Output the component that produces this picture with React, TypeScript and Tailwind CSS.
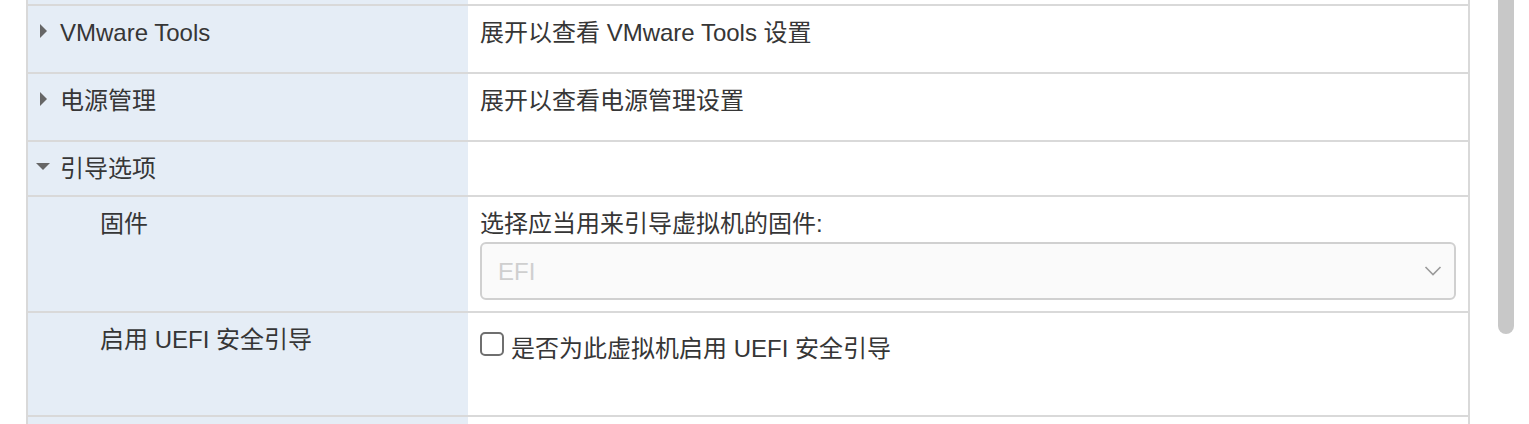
import React from 'react';

const FONT = "font-['Liberation_Sans','Noto_Sans_CJK_SC',sans-serif]";

const Caret: React.FC<{ open?: boolean }> = ({ open }) => (
    <span className="flex h-[29px] w-[14px] shrink-0 items-center justify-center">
        {open ? (
            <svg width="14" height="7" viewBox="0 0 14 7">
                <polygon points="0,0 14,0 7,7" fill="#666" />
            </svg>
        ) : (
            <svg width="7" height="14" viewBox="0 0 7 14">
                <polygon points="0,0 7,7 0,14" fill="#666" />
            </svg>
        )}
    </span>
);

interface RowProps {
    label: React.ReactNode;
    children?: React.ReactNode;
    className?: string;
}

const Row: React.FC<RowProps> = ({ label, children, className = '' }) => (
    <div className={`grid grid-cols-[440px_1fr] border-t-2 border-[#d9d9d9] ${className}`}>
        <div className="bg-[#e5edf6]">{label}</div>
        <div className="min-w-0">{children}</div>
    </div>
);

const GroupLabel: React.FC<{ text: string; open?: boolean }> = ({ text, open }) => (
    <div className="flex items-start gap-[10px] pl-[8px] pt-[10px]">
        <Caret open={open} />
        <span>{text}</span>
    </div>
);

const SubLabel: React.FC<{ text: string }> = ({ text }) => (
    <div className="pl-[72px] pt-[10px]">{text}</div>
);

export default function App() {
    return (
        <div className={`flex h-[424px] overflow-hidden bg-white text-[24px] leading-[33px] text-[#363636] ${FONT}`}>
            <div className="ml-[26px] w-[1444px] shrink-0 border-x-2 border-[#d9d9d9]">
                {/* tail of the previous row */}
                <div className="grid h-[4px] grid-cols-[440px_1fr]">
                    <div className="bg-[#e5edf6]" />
                    <div />
                </div>

                <Row className="h-[68px]" label={<GroupLabel text="VMware Tools" />}>
                    <div className="pl-[12px] pt-[10px]">展开以查看 VMware Tools 设置</div>
                </Row>

                <Row className="h-[68px]" label={<GroupLabel text="电源管理" />}>
                    <div className="pl-[12px] pt-[10px]">展开以查看电源管理设置</div>
                </Row>

                <Row className="h-[55px]" label={<GroupLabel text="引导选项" open />} />

                <Row className="h-[116px]" label={<SubLabel text="固件" />}>
                    <div className="pl-[12px] pr-[12px] pt-[10px]">
                        <div>选择应当用来引导虚拟机的固件:</div>
                        <div className="mt-[2px] flex h-[58px] items-center justify-between rounded-[6px] border-2 border-[#d0d0d0] bg-[#fafafa] pl-[16px] pr-[12px]">
                            <span className="text-[#cfcfcf]">EFI</span>
                            <svg width="18" height="12" viewBox="0 0 18 12" fill="none">
                                <path d="M1.5 2 L9 9.5 L16.5 2" stroke="#9a9a9a" strokeWidth="1.6" />
                            </svg>
                        </div>
                    </div>
                </Row>

                <Row className="h-[104px]" label={<SubLabel text="启用 UEFI 安全引导" />}>
                    <label className="flex items-start gap-[7px] pl-[12px] pt-[19px]">
                        <span className="h-[24px] w-[24px] shrink-0 rounded-[5px] border-2 border-[#6f6f6f] bg-white" />
                        <span>是否为此虚拟机启用 UEFI 安全引导</span>
                    </label>
                </Row>

                <Row className="h-[40px]" label={null} />
            </div>

            {/* scrollbar */}
            <div className="ml-[28px] w-[16px] shrink-0">
                <div className="h-[334px] rounded-b-[8px] bg-[#c8c8c8]" />
            </div>
        </div>
    );
}
